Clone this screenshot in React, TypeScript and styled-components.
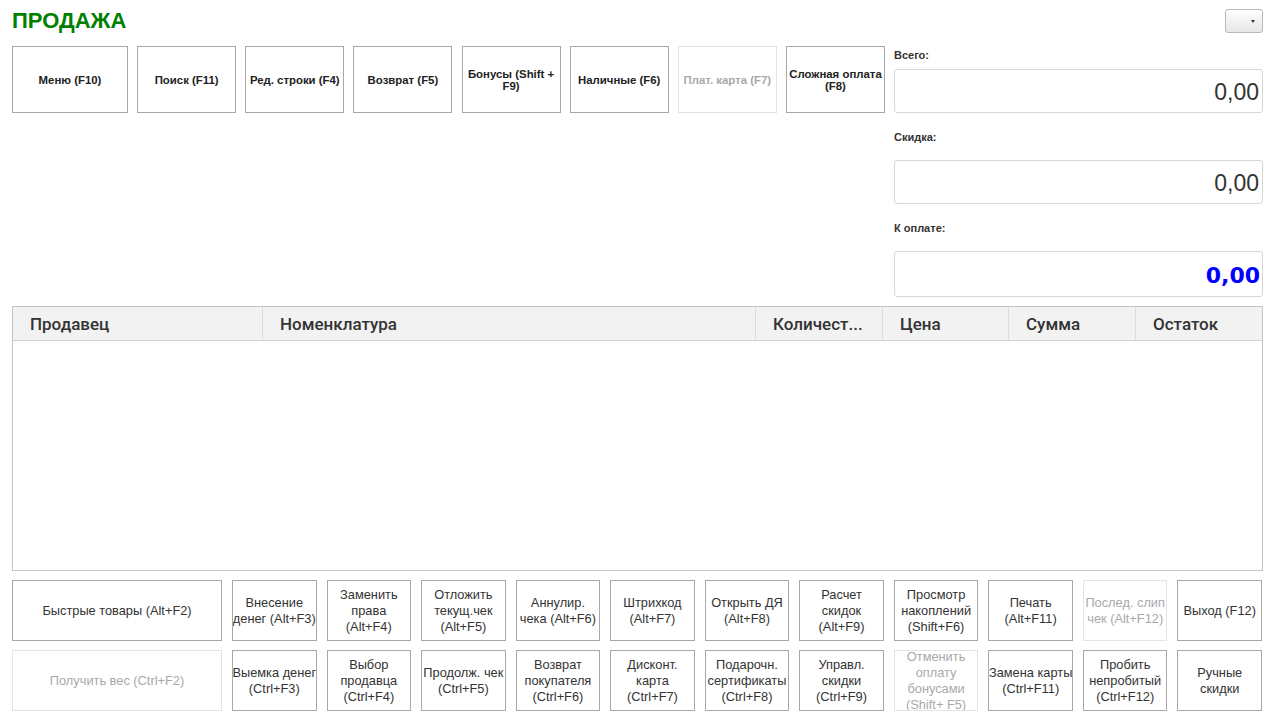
import { createGlobalStyle } from 'styled-components'
import styled from 'styled-components'

const GlobalStyle = createGlobalStyle`
  html, body {
    margin: 0;
    padding: 0;
    background: #fff;
  }
  body {
    font-family: 'Liberation Sans', Arial, sans-serif;
    color: #333;
  }
`

const Page = styled.div`
  width: 1280px;
  height: 724px;
  box-sizing: border-box;
  padding: 9px 17px 0 12px;
  display: flex;
  flex-direction: column;
  overflow: hidden;
`

const HeaderRow = styled.div`
  height: 24px;
  display: flex;
  align-items: center;
  justify-content: space-between;
`

const Title = styled.div`
  font-size: 22px;
  font-weight: bold;
  color: #008000;
`

const Select = styled.div`
  width: 38px;
  height: 24px;
  box-sizing: border-box;
  border: 1px solid #b8b8b8;
  border-radius: 3px;
  background: linear-gradient(#ffffff, #e6e6e6);
  display: flex;
  align-items: center;
  justify-content: flex-end;
  padding-right: 7px;
  &::after {
    content: '';
    border-left: 2.5px solid transparent;
    border-right: 2.5px solid transparent;
    border-top: 3px solid #333;
  }
`

const Body = styled.div`
  margin-top: 13px;
  display: flex;
`

const LeftCol = styled.div`
  flex: 1;
  margin-right: 9px;
`

const TopButtons = styled.div`
  display: flex;
  justify-content: space-between;
  align-items: flex-start;
`

const TopButton = styled.div<{ $wide?: boolean; $disabled?: boolean }>`
  width: ${p => (p.$wide ? 116 : 99)}px;
  height: 67px;
  box-sizing: border-box;
  border: 1px solid ${p => (p.$disabled ? '#e2e2e2' : '#a8a8a8')};
  background: #fff;
  display: flex;
  align-items: center;
  justify-content: center;
  text-align: center;
  font-size: 11.4px;
  font-weight: bold;
  line-height: 12px;
  color: ${p => (p.$disabled ? '#a8a8a8' : '#222')};
  white-space: pre;
`

const Panel = styled.div`
  width: 369px;
  display: flex;
  flex-direction: column;
`

const FieldLabel = styled.div<{ $first?: boolean }>`
  height: ${p => (p.$first ? 23 : 47)}px;
  display: flex;
  align-items: ${p => (p.$first ? 'flex-start' : 'center')};
  padding-top: ${p => (p.$first ? 3 : 0)}px;
  box-sizing: border-box;
  font-size: 11px;
  font-weight: bold;
  color: #333;
`

const Amount = styled.div<{ $total?: boolean }>`
  height: ${p => (p.$total ? 46 : 44)}px;
  box-sizing: border-box;
  border: 1px solid #d6d6d6;
  border-radius: 3px;
  display: flex;
  align-items: center;
  justify-content: flex-end;
  padding: ${p => (p.$total ? '2px 2px 0 0' : '3px 3px 0 0')};
  font-family: ${p => (p.$total ? "'DejaVu Sans', sans-serif" : "'Liberation Sans', Arial, sans-serif")};
  font-size: ${p => (p.$total ? 22 : 23)}px;
  font-weight: ${p => (p.$total ? 'bold' : 'normal')};
  color: ${p => (p.$total ? '#0000ff' : '#333')};
`

const Table = styled.div`
  margin-top: 9px;
  height: 265px;
  box-sizing: border-box;
  border: 1px solid #c4c4c4;
  display: flex;
  flex-direction: column;
`

const TableHead = styled.div`
  height: 33px;
  display: grid;
  grid-template-columns: 250px 493px 127px 126px 127px 1fr;
  background: #f2f2f2;
  border-bottom: 1px solid #d4d4d4;
`

const HeadCell = styled.div`
  display: flex;
  align-items: center;
  padding-left: 17px;
  border-right: 1px solid #dcdcdc;
  font-family: Roboto, 'Liberation Sans', sans-serif;
  font-weight: 500;
  font-size: 17px;
  color: #333;
  white-space: nowrap;
  overflow: hidden;
  &:last-child {
    border-right: none;
  }
`

const BottomGrid = styled.div`
  margin-top: 9px;
  width: 1250px;
  display: grid;
  grid-template-columns: 210px repeat(11, 1fr);
  grid-auto-rows: 61px;
  column-gap: 10px;
  row-gap: 9px;
`

const ActionButton = styled.div<{ $disabled?: boolean }>`
  box-sizing: border-box;
  border: 1px solid ${p => (p.$disabled ? '#e4e4e4' : '#a8a8a8')};
  background: #fff;
  display: flex;
  align-items: center;
  justify-content: center;
  overflow: hidden;
  font-size: 12.8px;
  line-height: 16px;
  color: ${p => (p.$disabled ? '#a9a9a9' : '#333')};
`

const ButtonText = styled.span`
  white-space: pre;
  text-align: center;
`

const topButtons = [
  { label: 'Меню (F10)', wide: true },
  { label: 'Поиск (F11)' },
  { label: 'Ред. строки (F4)' },
  { label: 'Возврат (F5)' },
  { label: 'Бонусы (Shift +\nF9)' },
  { label: 'Наличные (F6)' },
  { label: 'Плат. карта (F7)', disabled: true },
  { label: 'Сложная оплата\n(F8)' },
]

const columns = ['Продавец', 'Номенклатура', 'Количест...', 'Цена', 'Сумма', 'Остаток']

const actions = [
  { label: 'Быстрые товары (Alt+F2)' },
  { label: 'Внесение\nденег (Alt+F3)' },
  { label: 'Заменить\nправа\n(Alt+F4)' },
  { label: 'Отложить\nтекущ.чек\n(Alt+F5)' },
  { label: 'Аннулир.\nчека (Alt+F6)' },
  { label: 'Штрихкод\n(Alt+F7)' },
  { label: 'Открыть ДЯ\n(Alt+F8)' },
  { label: 'Расчет\nскидок\n(Alt+F9)' },
  { label: 'Просмотр\nнакоплений\n(Shift+F6)' },
  { label: 'Печать\n(Alt+F11)' },
  { label: 'Послед. слип\nчек (Alt+F12)', disabled: true },
  { label: 'Выход (F12)' },
  { label: 'Получить вес (Ctrl+F2)', disabled: true },
  { label: 'Выемка денег\n(Ctrl+F3)' },
  { label: 'Выбор\nпродавца\n(Ctrl+F4)' },
  { label: 'Продолж. чек\n(Ctrl+F5)' },
  { label: 'Возврат\nпокупателя\n(Ctrl+F6)' },
  { label: 'Дисконт.\nкарта\n(Ctrl+F7)' },
  { label: 'Подарочн.\nсертификаты\n(Ctrl+F8)' },
  { label: 'Управл.\nскидки\n(Ctrl+F9)' },
  { label: 'Отменить\nоплату\nбонусами\n(Shift+ F5)', disabled: true },
  { label: 'Замена карты\n(Ctrl+F11)' },
  { label: 'Пробить\nнепробитый\n(Ctrl+F12)' },
  { label: 'Ручные\nскидки' },
]

export default function App() {
  return (
    <Page>
      <GlobalStyle />
      <HeaderRow>
        <Title>ПРОДАЖА</Title>
        <Select />
      </HeaderRow>
      <Body>
        <LeftCol>
          <TopButtons>
            {topButtons.map(b => (
              <TopButton key={b.label} $wide={b.wide} $disabled={b.disabled}>
                {b.label}
              </TopButton>
            ))}
          </TopButtons>
        </LeftCol>
        <Panel>
          <FieldLabel $first>Всего:</FieldLabel>
          <Amount>0,00</Amount>
          <FieldLabel>Скидка:</FieldLabel>
          <Amount>0,00</Amount>
          <FieldLabel>К оплате:</FieldLabel>
          <Amount $total>0,00</Amount>
        </Panel>
      </Body>
      <Table>
        <TableHead>
          {columns.map(c => (
            <HeadCell key={c}>{c}</HeadCell>
          ))}
        </TableHead>
      </Table>
      <BottomGrid>
        {actions.map(a => (
          <ActionButton key={a.label} $disabled={a.disabled}>
            <ButtonText>{a.label}</ButtonText>
          </ActionButton>
        ))}
      </BottomGrid>
    </Page>
  )
}
